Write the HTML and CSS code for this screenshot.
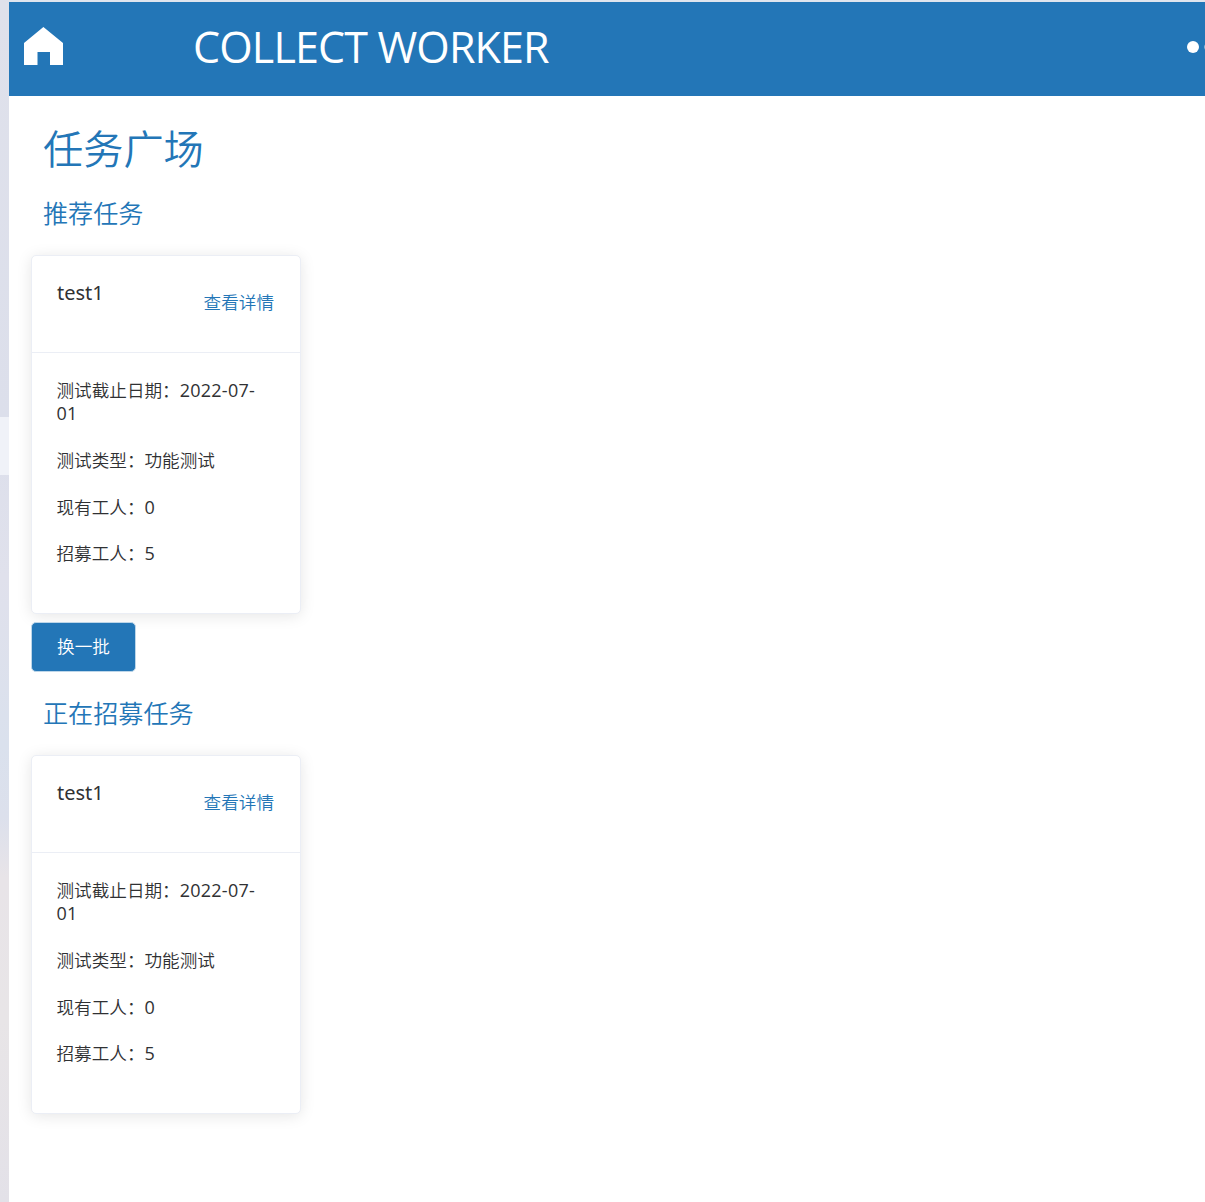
FILE: index.html
```html
<!DOCTYPE html>
<html lang="zh-CN">
<head>
<meta charset="utf-8">
<title>任务广场</title>
<link rel="stylesheet" href="styles.css">
</head>
<body>
<div class="layout">
  <aside class="rail"><div class="rail-item"></div></aside>
  <div class="page">
    <header class="topbar">
      <svg class="home" viewBox="0 0 39 38" fill="#fff"><path d="M0 16 19.4 0 39 16V38H26V25H13.5V38H0Z"/></svg>
      <span class="brand">COLLECT WORKER</span>
      <svg class="more" viewBox="0 0 48 12" fill="#fff"><circle cx="6" cy="6" r="6"/><circle cx="23.5" cy="6" r="6"/><circle cx="41" cy="6" r="6"/></svg>
    </header>
    <main class="content">
      <h1 class="title">任务广场</h1>
      <h2 class="subtitle">推荐任务</h2>
      <section class="card">
        <div class="card-head"><span class="name">test1</span><a class="detail">查看详情</a></div>
        <div class="card-body">
          <p>测试截止日期：<span class="num">2022-07-<br>01</span></p>
          <p>测试类型：功能测试</p>
          <p>现有工人：<span class="num">0</span></p>
          <p>招募工人：<span class="num">5</span></p>
        </div>
      </section>
      <button class="refresh">换一批</button>
      <h2 class="subtitle">正在招募任务</h2>
      <section class="card">
        <div class="card-head"><span class="name">test1</span><a class="detail">查看详情</a></div>
        <div class="card-body">
          <p>测试截止日期：<span class="num">2022-07-<br>01</span></p>
          <p>测试类型：功能测试</p>
          <p>现有工人：<span class="num">0</span></p>
          <p>招募工人：<span class="num">5</span></p>
        </div>
      </section>
    </main>
  </div>
</div>
</body>
</html>
```
FILE: styles.css
```css
* { box-sizing: border-box; }
body {
  margin: 0;
  background: #fff;
  color: #303133;
  font-family: "Noto Sans CJK SC", sans-serif;
  font-size: 17.6px;
  font-weight: 350;
}
.layout { display: flex; height: 1202px; overflow: hidden; }
.rail {
  flex: 0 0 9px;
  padding-top: 417px;
  background: linear-gradient(#dfe1eb 0, #dcdfeb 35%, #e0e1ec 48%, #dae1ed 62%, #dce0ec 68%, #e8e4e8 73%, #e8e5e7 85%, #e3e1e8 100%);
}
.rail-item { height: 58px; background: #f0f2f8; }
.page { flex: 1; min-width: 0; border-top: 2px solid #dfe5ee; }
.topbar {
  display: flex;
  align-items: center;
  height: 94px;
  padding: 0 0 5px 15px;
  overflow: hidden;
  background: #2376b7;
}
.home { flex: none; width: 39px; height: 38px; margin-bottom: 2px; }
.brand {
  margin-left: 130px;
  color: #fff;
  font: 430 43px/60px "Open Sans", sans-serif;
  letter-spacing: -.85px;
  white-space: nowrap;
}
.more { flex: none; width: 48px; height: 12px; margin: 0 -30px 0 auto; }
.content { padding: 21px 22px 0; }
.title, .subtitle { margin: 0; padding-left: 12px; color: #2376b7; font-weight: 350; }
.title { font-size: 40.2px; line-height: 60px; }
.subtitle { margin: 17px 0 24px; font-size: 25.1px; line-height: 37px; }
.card {
  width: 270px;
  height: 359px;
  border: 1px solid #ebeef5;
  border-radius: 5px;
  background: #fff;
  box-shadow: 0 2px 15px rgba(0, 0, 0, .1);
}
.card-head {
  display: flex;
  justify-content: space-between;
  height: 97px;
  padding: 22px 26px 0 25px;
  border-bottom: 1px solid #ebeef5;
}
.name { font: 400 20px/30px "Noto Sans", sans-serif; }
.detail { padding-top: 12px; color: #2376b7; line-height: 24px; }
.card-body { padding: 25px 20px 0 24.5px; }
.card-body p { margin: 0 0 23.2px; line-height: 23.4px; }
.num { font-family: "Open Sans", sans-serif; font-size: 18px; font-weight: 400; line-height: 0; letter-spacing: .25px; }
.refresh {
  display: block;
  width: 105px;
  height: 50px;
  margin: 8px 0 22px;
  border: 1px solid #bdd6e9;
  border-radius: 5px;
  padding: 0 0 3px;
  background: #2376b7;
  color: #fff;
  font: inherit;
}
.refresh + .subtitle { margin-top: 22px; }
```
